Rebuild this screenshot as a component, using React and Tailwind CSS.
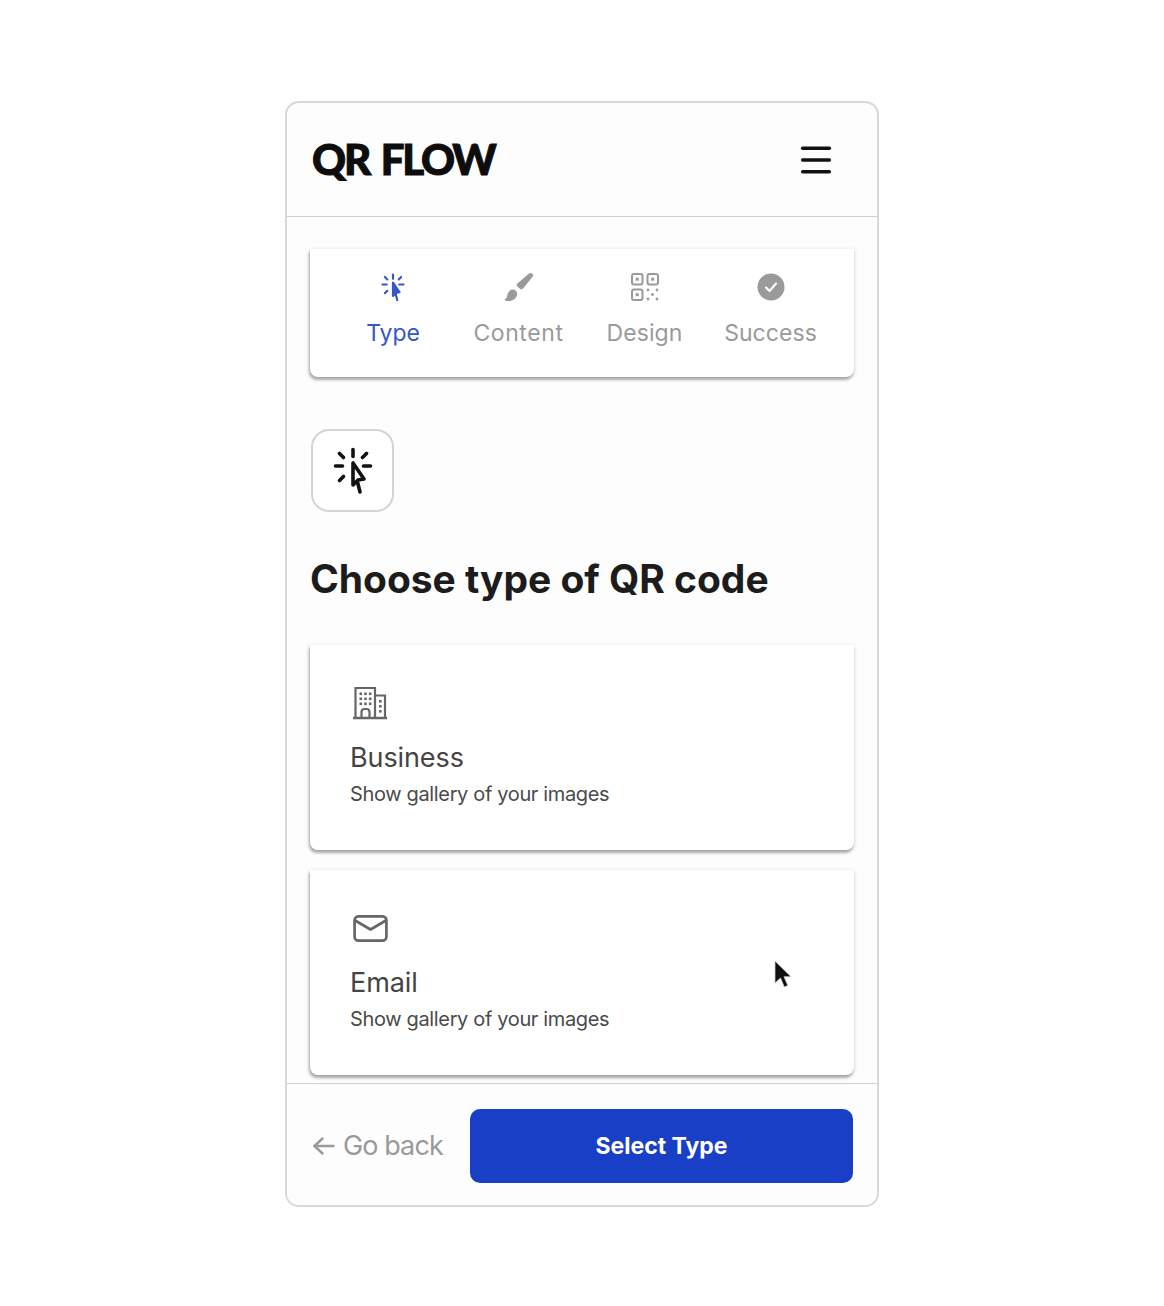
import { Menu } from "lucide-react";

function ClickIcon({ className, fill = "none" }) {
  return (
    <svg viewBox="0 0 40 48" fill="none" stroke="currentColor" strokeWidth="3.600" strokeLinecap="round" strokeLinejoin="round" className={className}>
      <path d="M20 2.500v7" />
      <path d="M6.500 6.500l4 4" />
      <path d="M33.500 6.500l-4 4" />
      <path d="M2.500 19h7" />
      <path d="M30.500 19h7" />
      <path d="M6.500 33.500l4-4" />
      <path d="M20 16v22l5-5 6-1z" fill={fill} />
      <path d="M24.500 35l2.500 10" />
    </svg>
  );
}

function BrushIcon({ className }) {
  return (
    <svg viewBox="0 0 30 30" fill="currentColor" className={className}>
      <path d="M28 1.500c1.300 .6 1.500 2 .6 3.200l-9.500 11.800c-.8 1-2.200 1.100-3.100 .3l-2.600-2.300c-.9-.8-.9-2.200 0-3.100l11.600-9.800c1-.8 2.100-.7 3-.1z" />
      <path d="M8 17.500c2.800-.6 5.500 1.800 5.200 4.700-.4 3.700-3.800 6.800-8.800 6.800-1.800 0-3.400-.5-4-1.300 1.900-.6 2.300-2.300 2.900-4.500.7-2.800 2.300-5.100 4.700-5.700z" />
    </svg>
  );
}

function QrIcon({ className }) {
  return (
    <svg viewBox="0 0 28 28" fill="none" stroke="currentColor" className={className}>
      <rect x="1" y="1" width="10.500" height="10.500" rx="2" strokeWidth="2" />
      <rect x="16.500" y="1" width="10.500" height="10.500" rx="2" strokeWidth="2" />
      <rect x="1" y="16.500" width="10.500" height="10.500" rx="2" strokeWidth="2" />
      <g fill="currentColor" stroke="none">
        <rect x="4.700" y="4.700" width="3" height="3" />
        <rect x="20.200" y="4.700" width="3" height="3" />
        <rect x="4.700" y="20.200" width="3" height="3" />
        <circle cx="17" cy="17" r="1.400" />
        <circle cx="26" cy="17" r="1.400" />
        <circle cx="21.500" cy="21.500" r="1.400" />
        <circle cx="17" cy="26" r="1.400" />
        <circle cx="26" cy="26" r="1.400" />
      </g>
    </svg>
  );
}

function CheckIcon({ className }) {
  return (
    <svg viewBox="0 0 28 28" className={className}>
      <circle cx="14" cy="14" r="13.500" fill="currentColor" />
      <path d="M9 14.500l3.500 3.500 6.500-7.500" fill="none" stroke="#fff" strokeWidth="2.200" strokeLinecap="round" strokeLinejoin="round" />
    </svg>
  );
}

function BuildingIcon({ className }) {
  return (
    <svg viewBox="0 0 34 34" fill="none" stroke="currentColor" strokeWidth="2.200" className={className}>
      <path d="M0 32h34" strokeWidth="2.400" />
      <path d="M2.500 32V2h19.500v30" />
      <path d="M22 9.500h10v22.500" />
      <path d="M8.500 32v-6a3 3 0 0 1 3-3h2a3 3 0 0 1 3 3v6" />
      <g fill="currentColor" stroke="none">
        <rect x="6.500" y="6.500" width="2.600" height="2.600" />
        <rect x="11.200" y="6.500" width="2.600" height="2.600" />
        <rect x="15.900" y="6.500" width="2.600" height="2.600" />
        <rect x="6.500" y="11.500" width="2.600" height="2.600" />
        <rect x="11.200" y="11.500" width="2.600" height="2.600" />
        <rect x="15.900" y="11.500" width="2.600" height="2.600" />
        <rect x="6.500" y="16.500" width="2.600" height="2.600" />
        <rect x="11.200" y="16.500" width="2.600" height="2.600" />
        <rect x="15.900" y="16.500" width="2.600" height="2.600" />
        <rect x="26" y="14" width="2.600" height="2.600" />
        <rect x="26" y="19" width="2.600" height="2.600" />
        <rect x="26" y="24" width="2.600" height="2.600" />
      </g>
    </svg>
  );
}

function MailIcon({ className }) {
  return (
    <svg viewBox="0 0 36 28" fill="none" stroke="currentColor" strokeWidth="2.800" strokeLinejoin="round" strokeLinecap="round" className={className}>
      <rect x="1.500" y="1.500" width="33" height="25" rx="4" />
      <path d="M2.500 6l15.500 9 15.500-9" />
    </svg>
  );
}

function Step({ icon, label, active, width, tracking }) {
  return (
    <div className={`flex flex-col items-center gap-[17px] ${width} ${active ? "text-[#3557c4]" : "text-[#9a9a9a]"}`}>
      <div className="flex h-[30px] items-center justify-center">{icon}</div>
      <span className={`text-[23px] leading-[28px] ${tracking}`}>{label}</span>
    </div>
  );
}

function TypeCard({ icon, title }) {
  return (
    <div className="h-[205px] shrink-0 rounded-b-lg bg-white pl-[40px] pt-[39px] shadow-[-1px_3px_3px_rgba(0,0,0,0.28),0_1px_4px_rgba(0,0,0,0.16)]">
      <div className="ml-[3px] flex h-[38px] items-center text-[#666]">{icon}</div>
      <div className="mt-[19px] text-[27px] leading-[34px] tracking-[-0.1px] text-[#444]">{title}</div>
      <div className="mt-[6px] text-[20px] leading-[26px] tracking-[-0.35px] text-[#4a4a4a]">Show gallery of your images</div>
    </div>
  );
}

export default function App() {
  return (
    <div className="relative flex min-h-[1306px] justify-center bg-white pt-[101px] font-['Inter',sans-serif]">
      <div className="flex h-[1106px] w-[594px] flex-col overflow-hidden rounded-[14px] border-2 border-[#d8d8d8] bg-[#fdfdfd]">
        <header className="flex h-[114px] shrink-0 items-center justify-between border-b border-[#cfcfcf] pl-[25px] pr-[41px]">
          <span className="font-['Lato',sans-serif] text-[42px] font-black tracking-[-2.200px] [word-spacing:4px] text-[#0d0d0d] [-webkit-text-stroke:1px_#0d0d0d]">QR FLOW</span>
          <Menu className="h-[40px] w-[40px] text-[#111]" strokeWidth={2.1} />
        </header>

        <main className="flex min-h-0 flex-1 flex-col overflow-hidden px-[23px]">
          <div className="mt-[32px] flex h-[128px] shrink-0 items-start rounded-b-lg bg-white pl-[33px] pt-[23px] shadow-[-1px_3px_3px_rgba(0,0,0,0.28),0_1px_4px_rgba(0,0,0,0.16)]">
            <Step active width="w-[100px]" tracking="tracking-[-0.1px]" label="Type" icon={<ClickIcon className="h-[29px] w-[24px]" fill="currentColor" />} />
            <Step width="w-[151px]" tracking="tracking-[0.6px]" label="Content" icon={<BrushIcon className="h-[30px] w-[30px]" />} />
            <Step width="w-[101px]" tracking="tracking-[0.1px]" label="Design" icon={<QrIcon className="h-[28px] w-[28px]" />} />
            <Step width="w-[151px]" tracking="tracking-[0.05px]" label="Success" icon={<CheckIcon className="h-[28px] w-[28px]" />} />
          </div>

          <div className="ml-[1px] mt-[52px] flex h-[83px] w-[83px] shrink-0 items-center justify-center rounded-[18px] border-2 border-[#d4d4d4] bg-white">
            <ClickIcon className="h-[48px] w-[40px] text-[#111]" />
          </div>

          <h1 className="mt-[43px] text-[39px] font-bold leading-[48px] tracking-[-0.04px] text-[#1c1c1c]">Choose type of QR code</h1>

          <div className="mt-[42px] flex flex-col gap-[20px]">
            <TypeCard title="Business" icon={<BuildingIcon className="h-[34px] w-[34px]" />} />
            <TypeCard title="Email" icon={<MailIcon className="h-[27px] w-[35px]" />} />
          </div>
        </main>

        <footer className="z-10 flex h-[122px] shrink-0 items-center justify-between border-t border-[#cfcfcf] bg-[#fdfdfd] pl-[26px] pr-[24px] pt-[3px]">
          <div className="flex items-center gap-[8px] text-[#9a9a9a]">
            <svg viewBox="0 0 22 18" fill="none" stroke="currentColor" strokeWidth="2.400" strokeLinecap="round" strokeLinejoin="round" className="h-[18px] w-[22px]">
              <path d="M1.500 9h19" />
              <path d="M9.500 1.500L1.500 9l8 7.500" />
            </svg>
            <span className="text-[27px] leading-[34px] tracking-[-0.9px]">Go back</span>
          </div>
          <button className="flex h-[74px] w-[383px] items-center justify-center rounded-[10px] bg-[#1a3fc7] text-[23px] font-bold text-white">Select Type</button>
        </footer>
      </div>

      <svg viewBox="0 0 18 30" className="absolute left-[774px] top-[960px] h-[30px] w-[18px]">
        <path d="M1 1v22l5.500-5 3.800 9 3.500-1.600-3.800-8.700h7z" fill="#111" stroke="#ccc" strokeWidth="0.800" />
      </svg>
    </div>
  );
}
